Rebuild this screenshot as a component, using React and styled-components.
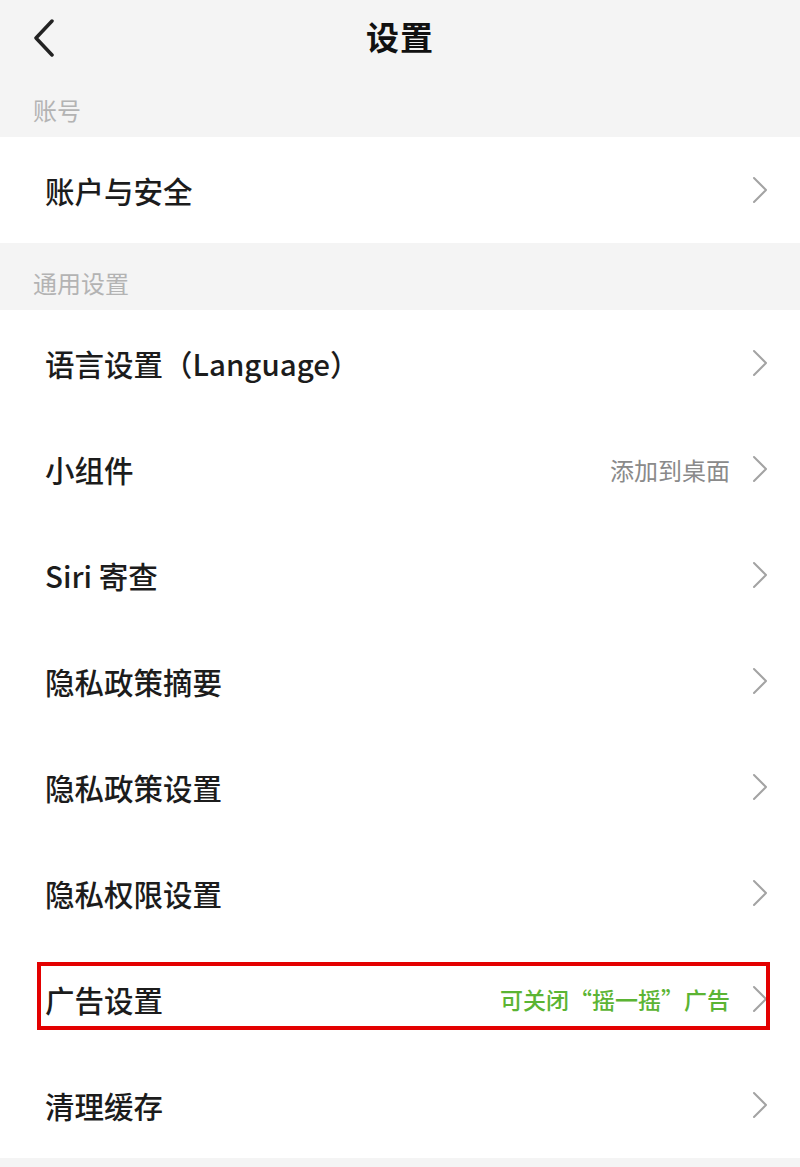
import React from 'react'
import styled, { createGlobalStyle } from 'styled-components'

const GlobalStyle = createGlobalStyle`
    html, body {
        margin: 0;
        padding: 0;
        background: #f4f4f4;
        font-family: "Noto Sans CJK SC", "Noto Sans", sans-serif;
    }
`

const Page = styled.div`
    width: 800px;
    min-height: 1167px;
    background: #f4f4f4;
`

const NavBar = styled.header`
    position: relative;
    height: 76px;
    display: flex;
    align-items: center;
    justify-content: center;
`

const BackButton = styled.div`
    position: absolute;
    left: 32px;
    top: 19px;
    width: 24px;
    height: 38px;
`

const Title = styled.h1`
    margin: 0 0 4px;
    font-size: 33px;
    font-weight: 700;
    color: #111;
    letter-spacing: 1px;
`

const SectionLabel = styled.div`
    height: ${props => props.$height}px;
    box-sizing: border-box;
    display: flex;
    align-items: flex-end;
    padding: 0 0 15px 33px;
    font-size: 24px;
    line-height: 1;
    color: #b3b3b3;
`

const List = styled.div`
    background: #fff;
`

const Row = styled.div`
    position: relative;
    height: 106px;
    display: flex;
    align-items: center;
    padding: 0 32px 0 45px;
`

const Label = styled.span`
    flex: 1;
    font-size: 29.5px;
    font-weight: 500;
    color: #1c1c1c;
`

const Extra = styled.span`
    margin-right: 22px;
    font-size: ${props => props.$accent ? '23px' : '24px'};
    color: ${props => props.$accent ? '#5bb433' : '#8a8a8a'};
    font-weight: ${props => props.$accent ? 500 : 400};
`

const Highlight = styled.div`
    position: absolute;
    top: 16px;
    bottom: 22px;
    left: 37px;
    right: 30px;
    border: 4px solid #e30000;
    pointer-events: none;
`

const Chevron = () => (
    <svg width="16" height="28" viewBox="0 0 16 28">
        <polyline points="2,2 14,14 2,26" fill="none" stroke="#a3a3a3" strokeWidth="2" strokeLinecap="round" strokeLinejoin="round" />
    </svg>
)

const BackIcon = () => (
    <svg width="24" height="38" viewBox="0 0 24 38">
        <polyline points="20,2 4,19 20,36" fill="none" stroke="#222" strokeWidth="3.5" strokeLinecap="round" strokeLinejoin="round" />
    </svg>
)

const general = [
    { label: '语言设置（Language）' },
    { label: '小组件', extra: '添加到桌面' },
    { label: 'Siri 寄查' },
    { label: '隐私政策摘要' },
    { label: '隐私政策设置' },
    { label: '隐私权限设置' },
    { label: '广告设置', extra: '可关闭“摇一摇”广告', accent: true, highlight: true },
    { label: '清理缓存' },
]

function SettingRow({ label, extra, accent, highlight }) {
    return (
        <Row>
            <Label>{label}</Label>
            {extra && <Extra $accent={accent}>{extra}</Extra>}
            <Chevron />
            {highlight && <Highlight />}
        </Row>
    )
}

export default function App() {
    return (
        <Page>
            <GlobalStyle />
            <NavBar>
                <BackButton><BackIcon /></BackButton>
                <Title>设置</Title>
            </NavBar>
            <SectionLabel $height={61}>账号</SectionLabel>
            <List>
                <SettingRow label="账户与安全" />
            </List>
            <SectionLabel $height={67}>通用设置</SectionLabel>
            <List>
                {general.map(item => <SettingRow key={item.label} {...item} />)}
            </List>
        </Page>
    )
}
